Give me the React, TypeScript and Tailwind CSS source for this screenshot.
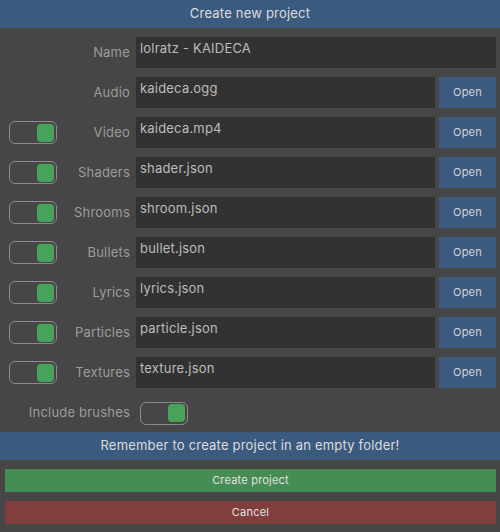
import React, { useState } from "react";

const fileRows = [
  { label: "Video", value: "kaideca.mp4" },
  { label: "Shaders", value: "shader.json" },
  { label: "Shrooms", value: "shroom.json" },
  { label: "Bullets", value: "bullet.json" },
  { label: "Lyrics", value: "lyrics.json" },
  { label: "Particles", value: "particle.json" },
  { label: "Textures", value: "texture.json" },
];

function Toggle({ on, onClick }: { on: boolean; onClick: () => void }) {
  return (
    <button
      onClick={onClick}
      className="w-[48px] h-[23px] rounded-[6px] border-[1.5px] border-[#8a8a8a] flex items-center justify-end pr-[2px] shrink-0"
    >
      {on && <span className="block w-[17px] h-[18px] rounded-[4px] bg-[#48a35a]" />}
    </button>
  );
}

function Label({ children }: { children: React.ReactNode }) {
  return (
    <span className="w-[73px] text-right text-[13px] tracking-[0.2px] text-[#9c9c9c] shrink-0 whitespace-nowrap">
      {children}
    </span>
  );
}

function Field({ value }: { value: string }) {
  return (
    <div className="flex-1 h-[31px] bg-[#323232] ml-[6px] pl-[4px] pt-[1px] text-[13px] tracking-[0.2px] leading-[20px] text-[#bcbcbc]">
      {value}
    </div>
  );
}

function OpenButton() {
  return (
    <button className="w-[57px] h-[31px] ml-[4px] bg-[#3a5a80] text-[11px] tracking-[0.2px] text-[#d4d4d4] shrink-0">
      Open
    </button>
  );
}

export default function App() {
  const [enabled, setEnabled] = useState<boolean[]>(fileRows.map(() => true));
  const [brushes, setBrushes] = useState(true);

  return (
    <div
      className="w-[500px] h-[532px] bg-[#464646] flex flex-col"
      style={{ fontFamily: "Inter, 'Noto Sans', sans-serif" }}
    >
      {/* Header */}
      <div className="h-[28px] bg-[#3a5a80] flex items-center justify-center text-[13px] tracking-[0.2px] text-[#dcdcdc]">
        Create new project
      </div>

      <div className="flex flex-col gap-[9px] pt-[9px] pl-[9px] pr-[4px]">
        <div className="flex items-center">
          <div className="w-[48px] shrink-0" />
          <Label>Name</Label>
          <Field value="lolratz - KAIDECA" />
        </div>

        <div className="flex items-center">
          <div className="w-[48px] shrink-0" />
          <Label>Audio</Label>
          <Field value="kaideca.ogg" />
          <OpenButton />
        </div>

        {fileRows.map((row, i) => (
          <div key={row.label} className="flex items-center">
            <Toggle
              on={enabled[i]}
              onClick={() => setEnabled(enabled.map((v, j) => (j === i ? !v : v)))}
            />
            <Label>{row.label}</Label>
            <Field value={row.value} />
            <OpenButton />
          </div>
        ))}
      </div>

      {/* Include brushes */}
      <div className="flex items-center mt-[13px] h-[24px]">
        <span className="w-[130px] text-right text-[13px] tracking-[0.2px] text-[#9c9c9c] whitespace-nowrap">
          Include brushes
        </span>
        <div className="ml-[10px]">
          <Toggle on={brushes} onClick={() => setBrushes(!brushes)} />
        </div>
      </div>

      {/* Notice */}
      <div className="mt-[7px] h-[28px] bg-[#3a5a80] flex items-center justify-center text-[13px] tracking-[0.2px] text-[#dcdcdc]">
        Remember to create project in an empty folder!
      </div>

      <div className="flex flex-col gap-[9px] pt-[9px] pl-[5px] pr-[4px]">
        <button className="h-[23px] bg-[#468c55] text-[11px] tracking-[0.2px] text-[#e2e2e2]">
          Create project
        </button>
        <button className="h-[23px] bg-[#803e3c] text-[11px] tracking-[0.2px] text-[#e2e2e2]">
          Cancel
        </button>
      </div>
    </div>
  );
}
